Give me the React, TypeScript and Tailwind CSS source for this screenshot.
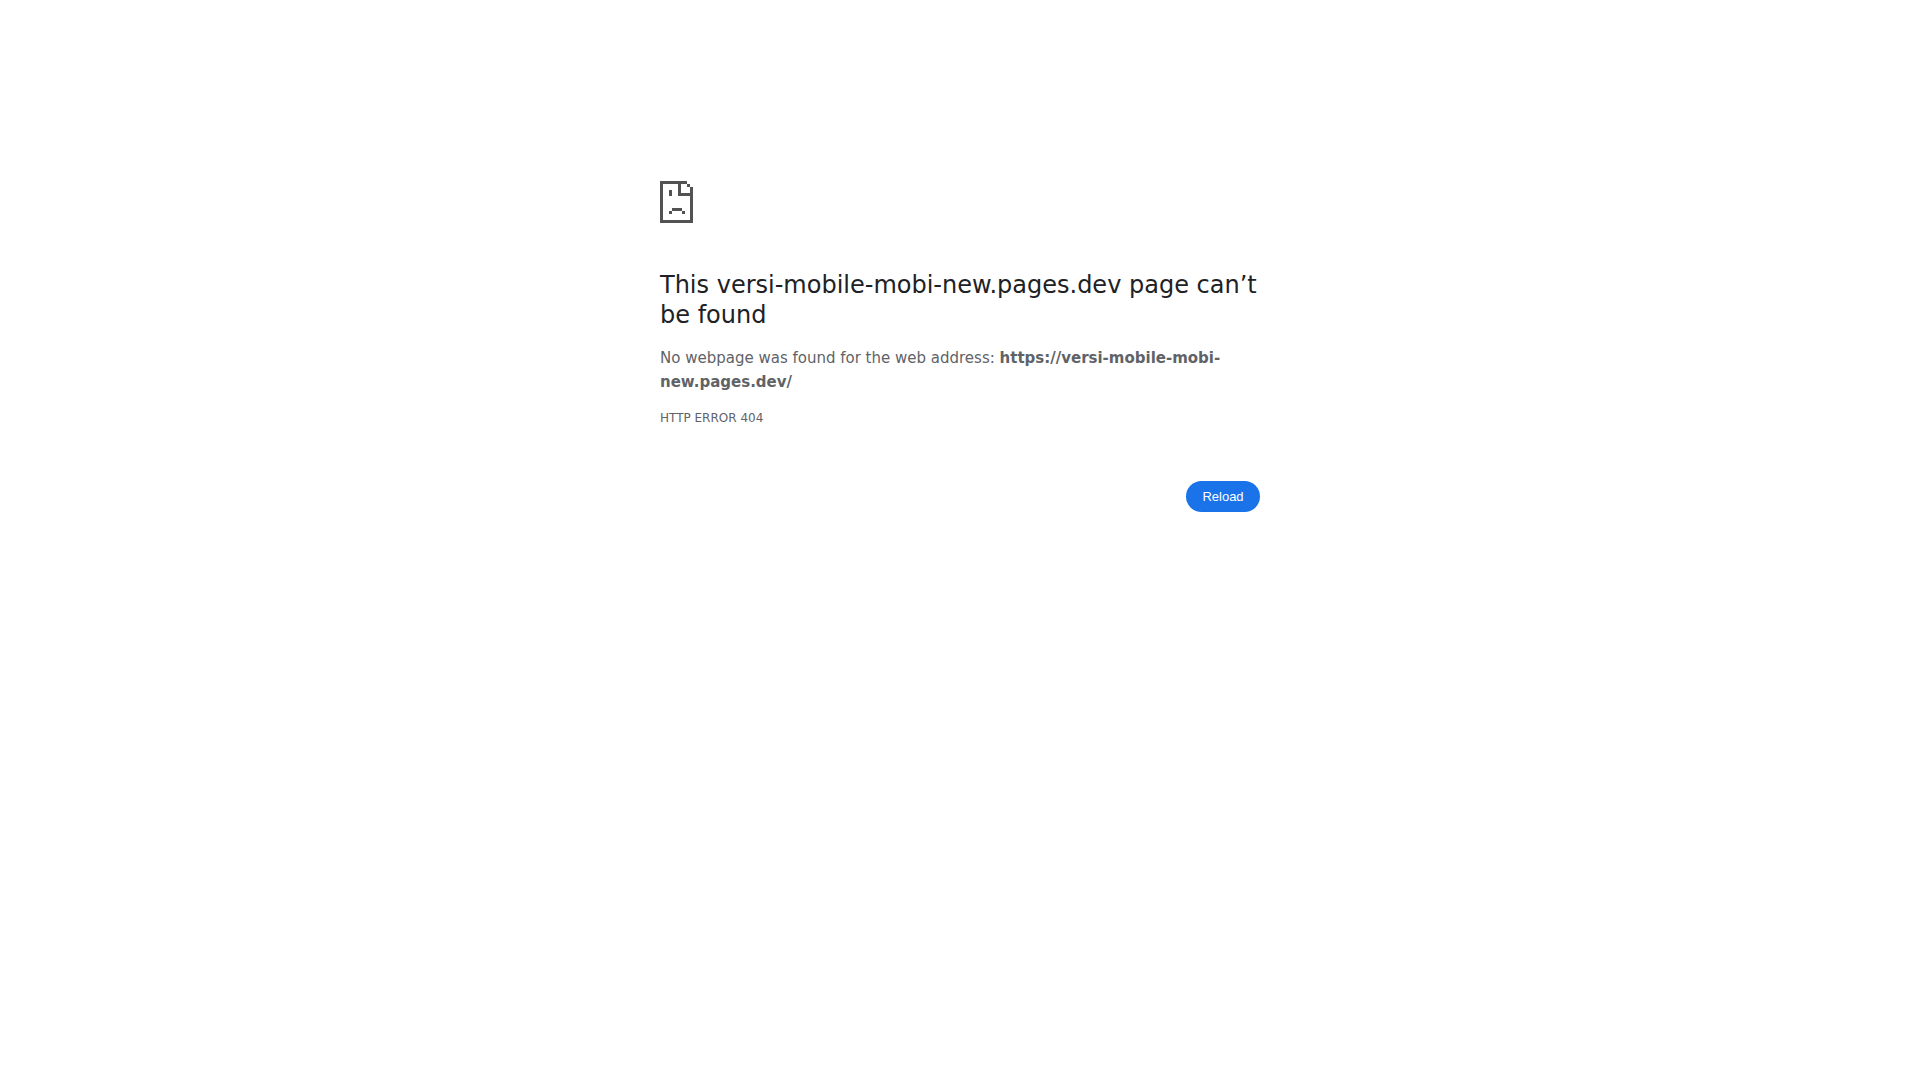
export default function App() {
  return (
    <main className="min-h-screen bg-white px-6 pt-[180px] font-['DejaVu_Sans',sans-serif] text-[15px] leading-6 text-[#5f6368]">
      <div className="mx-auto w-full max-w-[600px]">
        <svg
          className="mb-10 h-[50px] w-[33px]"
          viewBox="0 0 33 50"
          shapeRendering="crispEdges"
          fill="#525252"
          aria-hidden="true"
        >
          <path d="M0 1h27v3h3v3h3v36H0zM3 4v36h27V16H18V4zM21 4v9h9V7h-3V4z" fillRule="evenodd" />
          <path d="M9 10h3v6H9zM12 28h10v3H12zM9 31h3v3H9zM22 31h3v3h-3z" />
        </svg>
        <h1 className="mb-4 text-2xl leading-[30px] text-[#202124]">
          This versi-mobile-mobi-new.pages.dev page can’t be found
        </h1>
        <p>
          No webpage was found for the web address: <strong>https://versi-mobile-mobi-new.pages.dev/</strong>
        </p>
        <p className="mt-3 text-xs leading-6">HTTP ERROR 404</p>
        <div className="mt-[51px] flex justify-end">
          <button className="min-w-[74px] rounded-full bg-[#1a73e8] px-4 py-2 font-['Liberation_Sans',sans-serif] text-[13px] leading-[15px] text-white">
            Reload
          </button>
        </div>
      </div>
    </main>
  );
}
